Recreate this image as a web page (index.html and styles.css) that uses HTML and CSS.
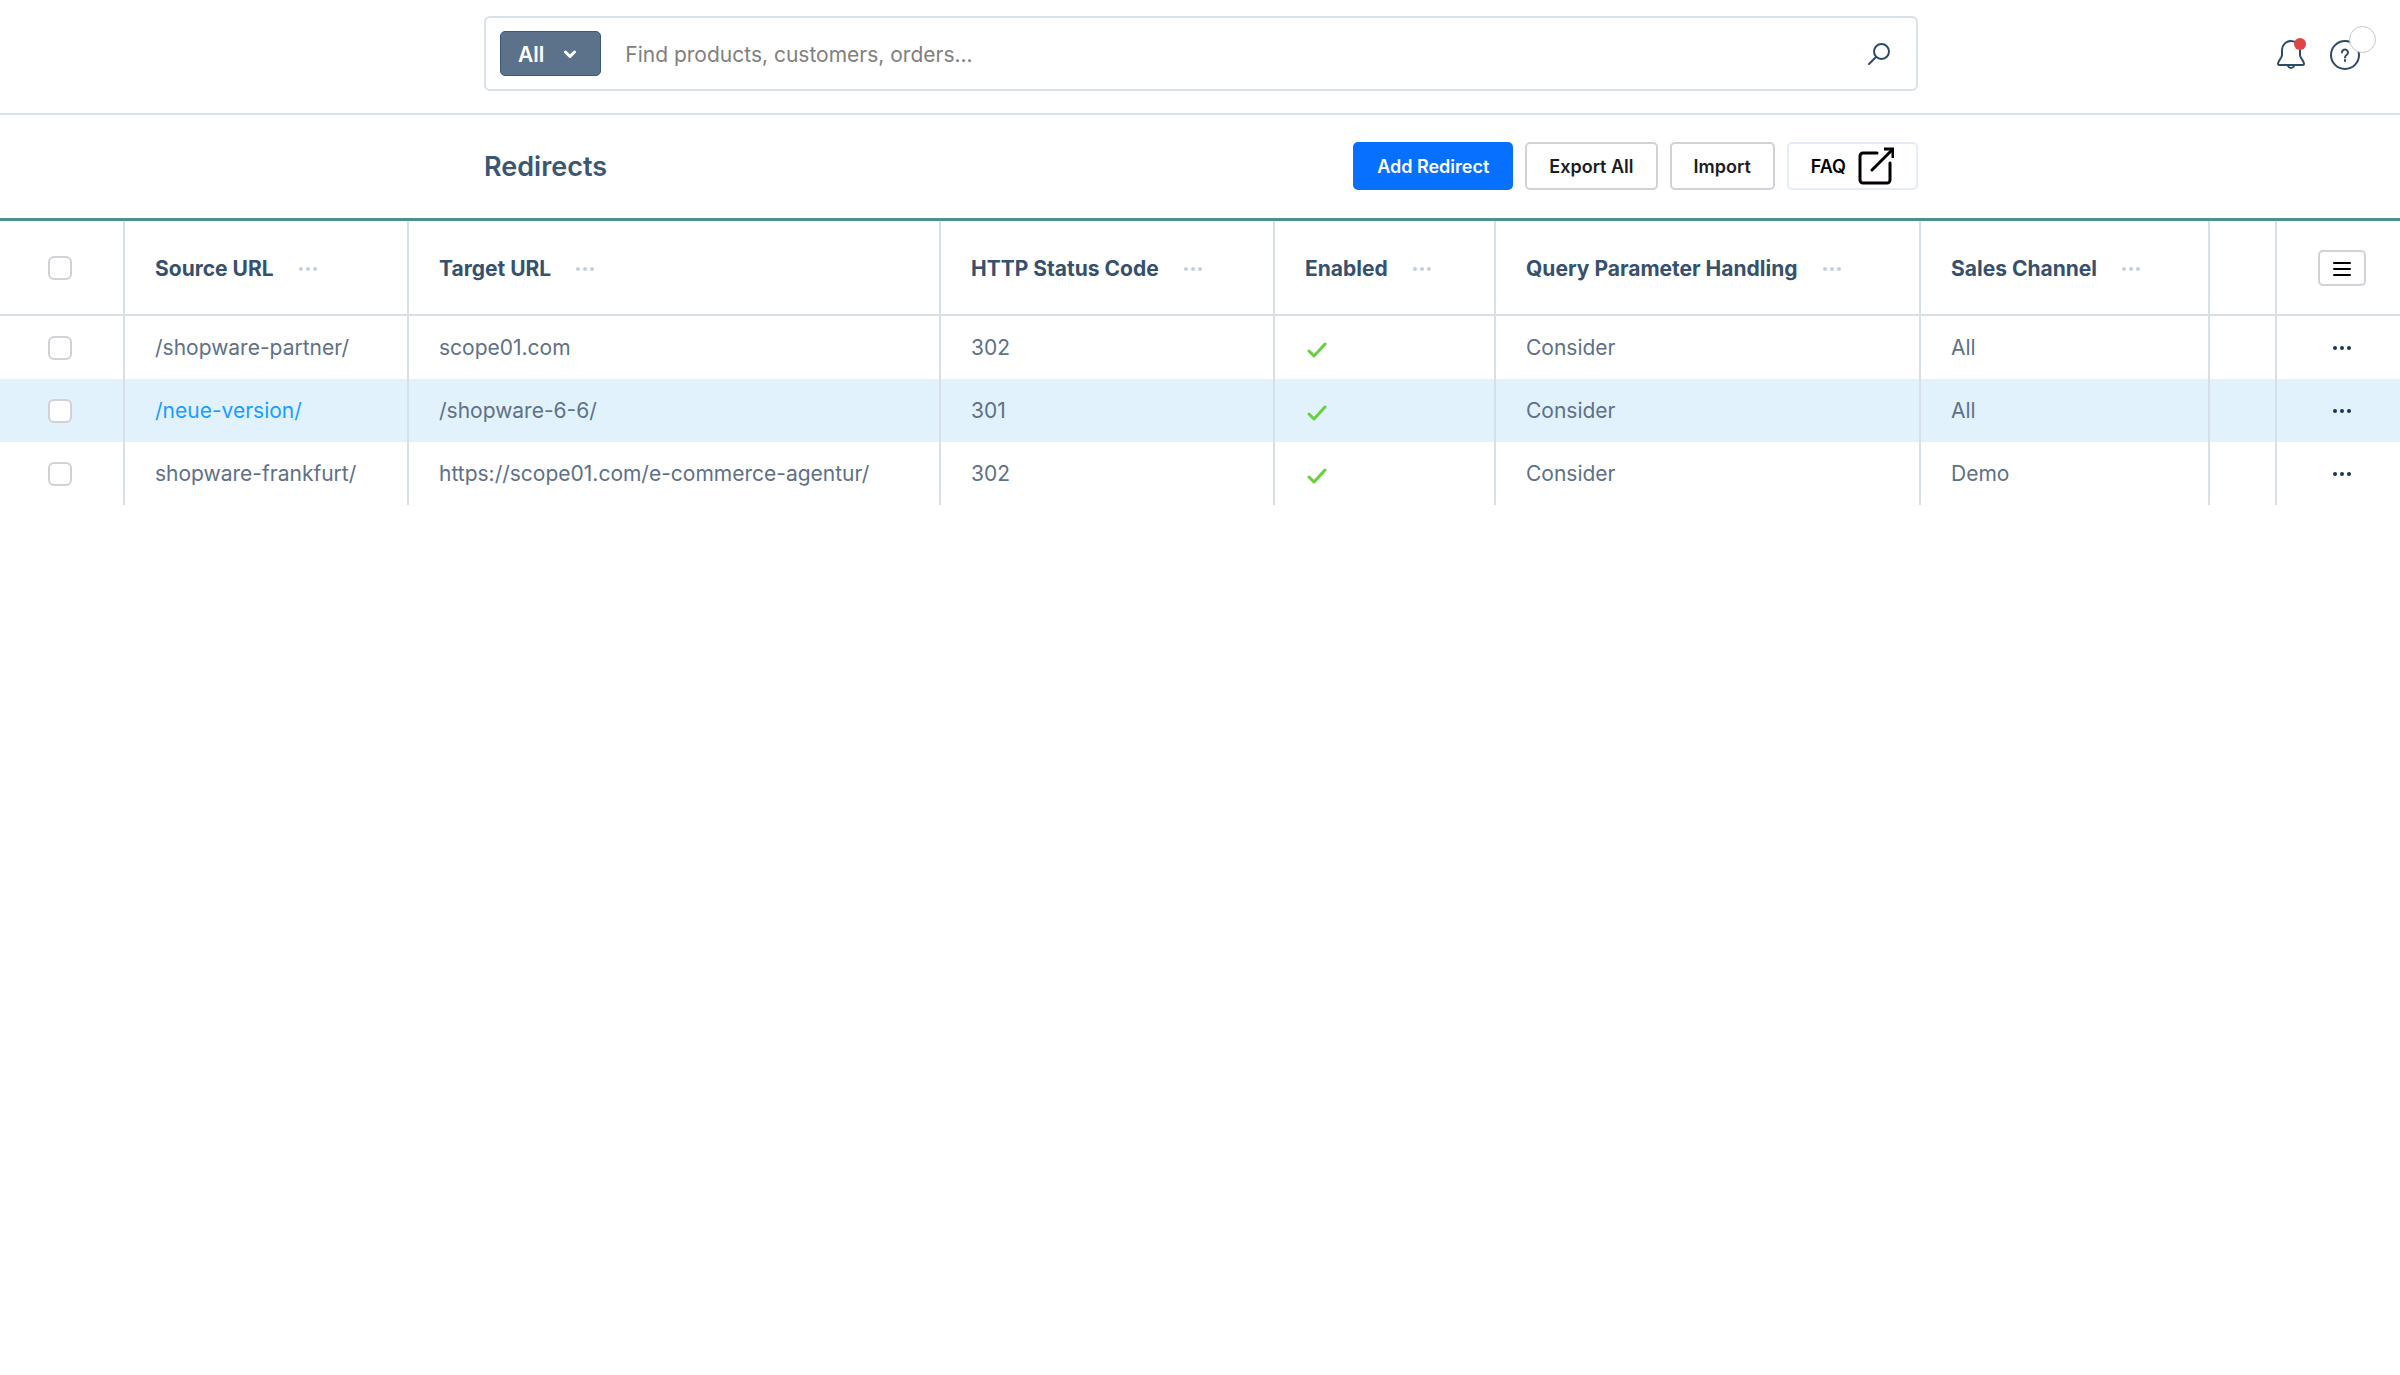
FILE: index.html
```html
<!DOCTYPE html>
<html lang="en">
<head>
<meta charset="utf-8">
<meta name="viewport" content="width=device-width, initial-scale=1">
<title>Redirects</title>
<link rel="stylesheet" href="styles.css">
</head>
<body>
<svg class="sprite" aria-hidden="true">
  <symbol id="dots" viewBox="0 0 20 6"><circle cx="3" cy="3" r="2"/><circle cx="10" cy="3" r="2"/><circle cx="17" cy="3" r="2"/></symbol>
  <symbol id="check" viewBox="0 0 20 16"><path d="M2 9l5 5L18 2"/></symbol>
</svg>

<header class="topbar">
  <form class="search" role="search">
    <button class="search-type" type="button">All
      <svg width="12" height="9" viewBox="0 0 12 9"><path d="M1.500 2L6 6.500 10.500 2"/></svg>
    </button>
    <input class="search-input" type="search" aria-label="Search" placeholder="Find products, customers, orders...">
    <button class="search-submit" type="submit" aria-label="Search">
      <svg width="24" height="24" viewBox="0 0 24 24"><circle cx="14.500" cy="9.500" r="7.500"/><path d="M9 15L2 22"/></svg>
    </button>
  </form>
  <div class="tools">
    <button class="tool" type="button" aria-label="Notifications">
      <svg width="30" height="32" viewBox="0 0 30 32"><path d="M6 12a9 9 0 0 1 18 0v5c0 3.500 4 5.500 4 8.500 0 1-.5 1.500-1.500 1.500h-23C2.500 27 2 26.500 2 25.500 2 22.500 6 20.500 6 17zM12 28a3.200 3.200 0 0 0 6 0"/></svg>
      <span class="dot"></span>
    </button>
    <button class="tool" type="button" aria-label="Help">
      <svg width="30" height="32" viewBox="0 0 30 32"><circle cx="15" cy="17" r="14"/><path d="M12 14.500a3 3 0 1 1 4.600 2.500c-1.100.7-1.600 1.200-1.600 2.500M15 22v1"/></svg>
      <span class="ring"></span>
    </button>
  </div>
</header>

<section class="smartbar">
  <div class="smartbar-inner">
    <h1 class="title">Redirects</h1>
    <div class="actions">
      <button class="btn btn-primary" type="button">Add Redirect</button>
      <button class="btn" type="button">Export All</button>
      <button class="btn" type="button">Import</button>
      <a class="btn btn-link" href="#faq">FAQ
        <svg width="36" height="42" viewBox="0 0 36 42"><path d="M19 7H5a3 3 0 0 0-3 3v24a3 3 0 0 0 3 3h24a3 3 0 0 0 3-3V17M14 24L34 4"/><path d="M26 3h9v9" stroke-linejoin="miter" stroke-linecap="butt"/></svg>
      </a>
    </div>
  </div>
</section>

<main>
<table class="grid">
  <colgroup>
    <col class="c-select"><col class="c-source"><col class="c-target"><col class="c-code"><col class="c-enabled"><col class="c-query"><col class="c-channel"><col class="c-spacer"><col class="c-actions">
  </colgroup>
  <thead>
    <tr>
      <th class="select"><input type="checkbox" aria-label="Select all"></th>
      <th><span class="head">Source URL<svg class="dots"><use href="#dots"/></svg></span></th>
      <th><span class="head">Target URL<svg class="dots"><use href="#dots"/></svg></span></th>
      <th><span class="head">HTTP Status Code<svg class="dots"><use href="#dots"/></svg></span></th>
      <th><span class="head">Enabled<svg class="dots"><use href="#dots"/></svg></span></th>
      <th><span class="head">Query Parameter Handling<svg class="dots"><use href="#dots"/></svg></span></th>
      <th><span class="head">Sales Channel<svg class="dots"><use href="#dots"/></svg></span></th>
      <th></th>
      <th class="row-actions"><button class="columns" type="button" aria-label="Columns"><svg width="18" height="16" viewBox="0 0 18 16"><path d="M1 2h16M1 8h16M1 14h16"/></svg></button></th>
    </tr>
  </thead>
  <tbody>
    <tr>
      <td class="select"><input type="checkbox" aria-label="Select /shopware-partner/"></td>
      <td>/shopware-partner/</td><td>scope01.com</td><td>302</td>
      <td><svg class="check"><use href="#check"/></svg></td>
      <td>Consider</td><td>All</td><td></td>
      <td class="row-actions"><button class="more" type="button" aria-label="Actions"><svg class="dots"><use href="#dots"/></svg></button></td>
    </tr>
    <tr class="active">
      <td class="select"><input type="checkbox" aria-label="Select /neue-version/"></td>
      <td><a href="#edit">/neue-version/</a></td><td>/shopware-6-6/</td><td>301</td>
      <td><svg class="check"><use href="#check"/></svg></td>
      <td>Consider</td><td>All</td><td></td>
      <td class="row-actions"><button class="more" type="button" aria-label="Actions"><svg class="dots"><use href="#dots"/></svg></button></td>
    </tr>
    <tr>
      <td class="select"><input type="checkbox" aria-label="Select shopware-frankfurt/"></td>
      <td>shopware-frankfurt/</td><td>https://scope01.com/e-commerce-agentur/</td><td>302</td>
      <td><svg class="check"><use href="#check"/></svg></td>
      <td>Consider</td><td>Demo</td><td></td>
      <td class="row-actions"><button class="more" type="button" aria-label="Actions"><svg class="dots"><use href="#dots"/></svg></button></td>
    </tr>
  </tbody>
</table>
</main>
</body>
</html>
```

FILE: styles.css
```css
* { box-sizing: border-box; }
body { margin: 0; background: #fff; color: #5e7186; font: 21px/32px Inter, "Liberation Sans", sans-serif; }
button, input { font: inherit; color: inherit; margin: 0; }
button { padding: 0; border: 0; background: none; cursor: pointer; }
svg { display: block; fill: none; stroke: currentColor; stroke-width: 2; stroke-linecap: round; stroke-linejoin: round; }
a { color: inherit; text-decoration: none; }
.sprite { position: absolute; width: 0; height: 0; }

.topbar { display: grid; grid-template-columns: 1fr minmax(0, 1434px) 1fr; align-items: center; padding: 16px 0 22px 2px; border-bottom: 2px solid #d9e2ea; }
.search { grid-column: 2; display: flex; align-items: center; height: 75px; padding: 0 25px 0 14px; border: 2px solid #d9e2ea; border-radius: 6px; }
.search-type { display: flex; align-items: center; gap: 20px; height: 45px; padding: 2px 24px 0 17px; border: 1px solid #3c5a78; border-radius: 5px; background: #5c718a; color: #fff; font-weight: 600; }
.search-type svg { stroke-width: 3; }
.search-input { flex: 1; min-width: 0; padding: 2px 24px 0; border: 0; outline: 0; background: none; }
.search-input::placeholder { color: #808080; opacity: 1; }
.search-submit { color: #2c4a68; }
.search-submit svg { stroke-width: 2; }
.tools { display: flex; justify-content: flex-end; gap: 24px; padding-right: 40px; color: #2c4a68; }
.tool { position: relative; }
.dot { position: absolute; top: 0; right: 0; width: 12px; height: 12px; border-radius: 50%; background: #de4646; }
.ring { position: absolute; top: -12px; right: -16px; width: 27px; height: 27px; border: 1px solid #c6c6cf; border-radius: 50%; background: #fff; }

.smartbar { display: grid; grid-template-columns: 1fr minmax(0, 1434px) 1fr; padding: 27px 0 28px 2px; border-bottom: 3px solid #4b918c; }
.smartbar-inner { grid-column: 2; display: flex; align-items: center; justify-content: space-between; }
.title { margin: 0; padding-top: 2px; color: #3b5672; font-size: 27px; font-weight: 600; }
.actions { display: flex; gap: 12px; }
.btn { display: flex; align-items: center; gap: 12px; height: 48px; padding: 2px 22px 0; border: 2px solid #d1d1d8; border-radius: 5px; background: #fff; color: #1c1c20; font-size: 18px; font-weight: 600; }
.btn-primary { border-color: #0870ff; background: #0870ff; color: #fff; }
.btn-link { border-color: #e6ecf5; color: #000; }
.btn-link svg { stroke-width: 3; }

.grid { width: 100%; border-collapse: separate; border-spacing: 0; table-layout: fixed; }
.c-select { width: 125px; } .c-source { width: 284px; } .c-target { width: 532px; } .c-code { width: 334px; } .c-enabled { width: 221px; } .c-query { width: 425px; } .c-channel { width: 289px; } .c-actions { width: 123px; }
.grid th, .grid td { height: 63px; padding: 0 0 0 30px; border-right: 2px solid #d8e0e7; text-align: left; white-space: nowrap; }
.grid th { height: 95px; border-bottom: 2px solid #d8e0e7; color: #36516d; font-weight: 700; }
.grid th:last-child, .grid td:last-child { border-right: 0; }
.grid .select { padding: 0 4px 0 0; text-align: center; }
.grid .row-actions { padding: 0 0 0 7px; }
.grid input { appearance: none; display: block; width: 24px; height: 24px; margin: 0 auto; border: 2px solid #d1d1d8; border-radius: 6px; background: #fff; }
.active td { background: #e1f2fd; }
.active a { color: #189eff; }
.head { display: flex; align-items: center; gap: 24px; padding-top: 2px; }
.dots { width: 20px; height: 6px; fill: currentColor; stroke: none; }
.head .dots { color: #c2d0dd; }
.check { width: 20px; height: 16px; margin: 4px 0 0 2px; color: #65d13c; stroke-width: 3; }
.more { display: block; margin: 0 auto; color: #17375c; }
.columns { display: flex; align-items: center; justify-content: center; width: 48px; height: 36px; margin: 0 auto; padding-top: 2px; border: 2px solid #d1d1d8; border-radius: 5px; color: #000; background: #fff; }
.columns svg { stroke-width: 2; }
```
